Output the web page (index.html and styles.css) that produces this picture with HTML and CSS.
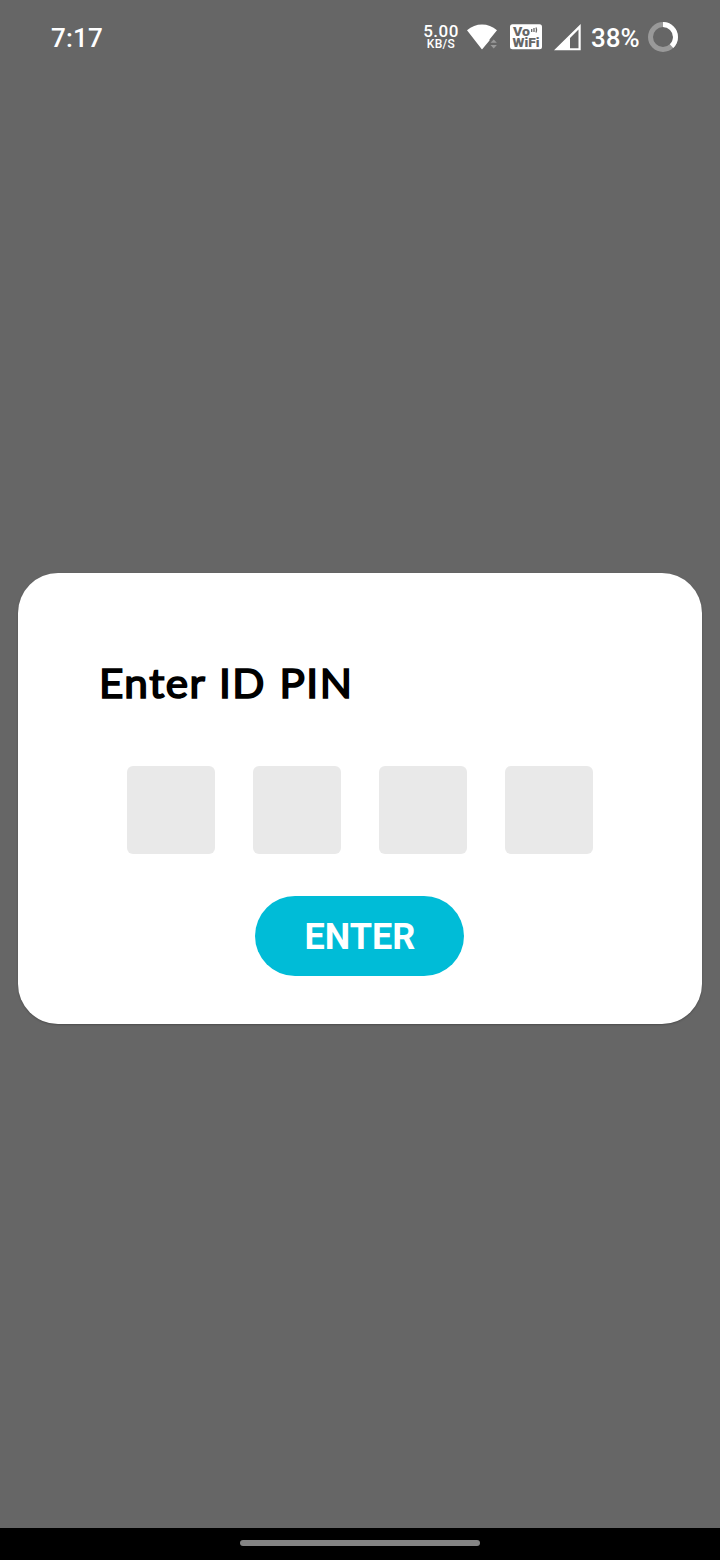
FILE: index.html
```html
<!DOCTYPE html>
<html lang="en">
<head>
<meta charset="utf-8">
<title>Enter ID PIN</title>
<link rel="stylesheet" href="styles.css">
</head>
<body>
<div class="screen">
  <header class="status">
    <span class="clock">7:17</span>
    <div class="indicators">
      <div class="speed"><span class="rate">5.00</span><span class="unit">KB/S</span></div>
      <svg class="wifi" width="30" height="26" viewBox="0 0 30 26">
        <path d="M0 6.300C4.500 2.300 9.500.500 15 .500S25.500 2.300 30 6.300L22.500 15.500V16.500L15.400 25Q15 25.500 14.600 25Z" fill="#fff"/>
        <path d="M23.500 18.800L26.700 15.400L29.900 18.800ZM23.500 21L26.700 24.400L29.900 21Z" fill="#999"/>
      </svg>
      <svg class="vowifi" width="32" height="26" viewBox="0 0 32 26">
        <rect y=".3" width="32" height="25" rx="2.500" fill="#fff"/>
        <text class="badge-text" x="3" y="11.500" textLength="17" lengthAdjust="spacingAndGlyphs">Vo</text>
        <text class="badge-text" x="2.500" y="22.700" textLength="27" lengthAdjust="spacingAndGlyphs">WiFi</text>
        <path d="M21.700 5V8M24 4V8M26 3.500Q27.200 6 26 8.500" fill="none" stroke="#666" stroke-width="1.300"/>
      </svg>
      <svg class="signal" width="27" height="27" viewBox="0 0 27 27">
        <path fill-rule="evenodd" d="M0 26.200L26.700 0V26.200ZM16 14V24.200H24.500V5.500Z" fill="#fff"/>
      </svg>
      <span class="percent">38%</span>
      <svg class="ring" width="30" height="30" viewBox="0 0 30 30">
        <circle cx="15" cy="15" r="12.500" fill="none" stroke="#999" stroke-width="5"/>
        <circle cx="15" cy="15" r="12.500" fill="none" stroke="#fff" stroke-width="5" pathLength="100" stroke-dasharray="38 62" transform="rotate(-90 15 15)"/>
      </svg>
    </div>
  </header>
  <main class="stage">
    <section class="dialog">
      <h1 class="title">Enter ID PIN</h1>
      <div class="pins">
        <span class="pin"></span><span class="pin"></span><span class="pin"></span><span class="pin"></span>
      </div>
      <button class="enter" type="button"><span class="enter-label">ENTER</span></button>
    </section>
  </main>
  <footer class="navbar"><span class="handle"></span></footer>
</div>
</body>
</html>
```
FILE: styles.css
```css
* { box-sizing: border-box; }
body { margin: 0; }
.screen {
  display: flex;
  flex-direction: column;
  width: 720px;
  height: 1560px;
  background: #666;
  color: #fff;
  font-family: Roboto, sans-serif;
}
.status {
  display: flex;
  justify-content: space-between;
  align-items: flex-start;
  height: 80px;
  padding: 0 42px 0 51px;
}
.clock {
  margin-top: 21px;
  font-size: 26px;
  font-weight: 500;
  line-height: 34px;
  letter-spacing: 0.2px;
}
.indicators { display: flex; align-items: flex-start; }
.speed {
  display: flex;
  flex-direction: column;
  align-items: center;
  width: 36px;
  margin: 23px 8px 0 0;
  font-weight: 500;
  white-space: nowrap;
}
.rate { font-size: 17px; line-height: 16px; letter-spacing: 0.5px; }
.unit { font-size: 12px; line-height: 10px; letter-spacing: 0.3px; }
.wifi { margin: 24px 13px 0 0; }
.vowifi { margin: 24px 12px 0 0; }
.badge-text { font: 900 12px Roboto, sans-serif; fill: #666; }
.signal { margin: 24px 10px 0 0; }
.percent {
  width: 49px;
  margin: 21px 8px 0 0;
  font-size: 26px;
  font-weight: 500;
  line-height: 34px;
  white-space: nowrap;
}
.ring { margin-top: 22px; }
.stage { flex: 1; padding: 492.500px 18px 0; }
.dialog {
  display: flex;
  flex-direction: column;
  align-items: center;
  height: 451px;
  padding-top: 82px;
  border-radius: 40px;
  background: #fff;
  box-shadow: 0 1px 2px rgba(0, 0, 0, 0.25);
}
.title {
  align-self: flex-start;
  margin: 0 0 0 81px;
  color: #000;
  font: 400 41px/56px Lato, sans-serif;
  letter-spacing: 1.500px;
  word-spacing: 1px;
  white-space: nowrap;
  transform: scaleX(1.03);
  transform-origin: left;
  -webkit-text-stroke: 1.700px #000;
  stroke-linejoin: round;
}
.pins { display: flex; gap: 38px; margin-top: 55px; }
.pin { width: 88px; height: 88px; border-radius: 6px; background: #e9e9e9; }
.enter {
  width: 209px;
  height: 80px;
  margin: 42px 1px 0 0;
  padding: 3px 0 0 1px;
  border: 0;
  border-radius: 40px;
  background: #00bcd7;
  color: #fff;
  font: 700 36px/42px Roboto, sans-serif;
}
.navbar {
  display: flex;
  justify-content: center;
  height: 32px;
  padding-top: 12px;
  background: #000;
}
.handle { width: 240px; height: 6px; border-radius: 3px; background: #848484; }
```
